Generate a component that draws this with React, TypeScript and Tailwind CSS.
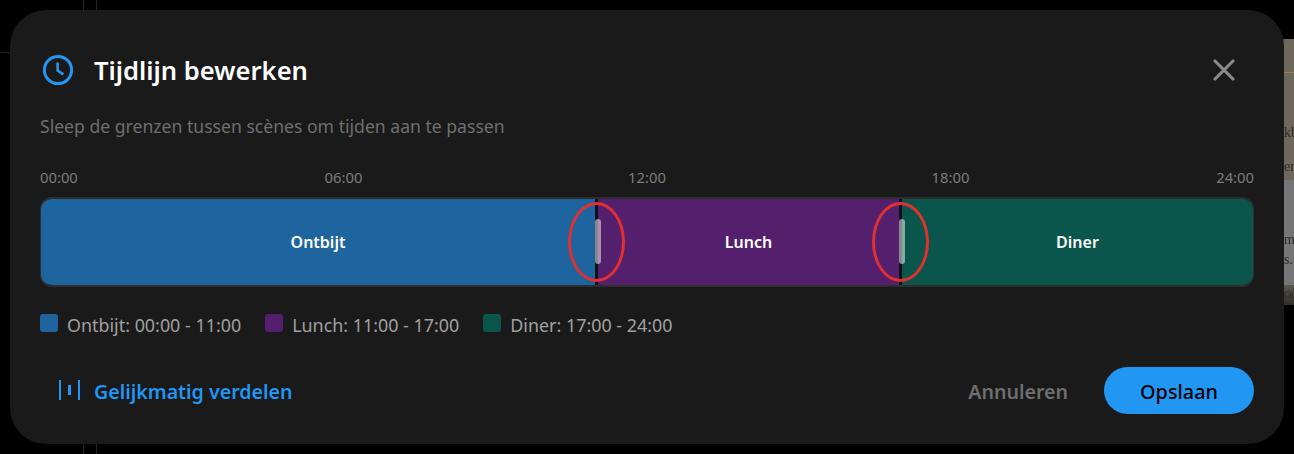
import { X } from 'lucide-react';

const font = { fontFamily: '"Noto Sans", "Open Sans", sans-serif' };

const legend = [
  { label: 'Ontbijt: 00:00 - 11:00', color: 'bg-[#1e659f]' },
  { label: 'Lunch: 11:00 - 17:00', color: 'bg-[#541f6c]' },
  { label: 'Diner: 17:00 - 24:00', color: 'bg-[#0b564c]' },
];

const behind = [
  { text: 'kb', cls: 'top-[86px]' },
  { text: 'en', cls: 'top-[120px]' },
  { text: 'm', cls: 'top-[193px]' },
  { text: 's.', cls: 'top-[213px]' },
];

function Handle() {
  return (
    <div className="relative z-10 w-[3px] shrink-0 bg-[#0d1117]">
      <div className="absolute left-0 top-[20px] h-[45px] w-[6px] rounded-full bg-[#ffffff80]" />
      <div className="absolute left-[-27px] top-[3px] h-[80px] w-[57px] rounded-[50%] border-[3px] border-[#e22f2f]" />
    </div>
  );
}

function ClockIcon() {
  return (
    <svg viewBox="0 0 32 32" className="h-[32px] w-[32px]" fill="none" stroke="#2196f3" strokeWidth="3">
      <circle cx="16" cy="16" r="13.6" />
      <path d="M15.6 8.5V16.6L21.4 20.4" strokeWidth="2.6" />
    </svg>
  );
}

function DistributeIcon() {
  return (
    <svg viewBox="0 0 21 20" className="h-[20px] w-[21px]" fill="#2196f3">
      <rect x="0" y="0" width="2" height="20" />
      <rect x="9" y="5" width="3" height="10" />
      <rect x="19" y="0" width="2" height="20" />
    </svg>
  );
}

export default function App() {
  return (
    <div className="relative h-[454px] w-[1294px] overflow-hidden bg-black p-[10px]" style={font}>
      {/* page behind the dialog */}
      <div className="absolute left-[1280px] top-[39px] flex h-[266px] w-[14px] flex-col overflow-hidden bg-[#6e675c] font-['Liberation_Serif',serif] text-[14px] leading-[16px] text-[#2c2a26] blur-[0.6px]">
        <div className="mt-[33px] h-px bg-[#a07f45]" />
        <div className="mt-[107px] h-[105px] bg-[#767676]" />
        <div className="flex-1 bg-gradient-to-b from-[#5c5a55] to-[#2e2c28]" />
        {behind.map((b) => (
          <span key={b.text} className={`absolute left-[4px] ${b.cls}`}>
            {b.text}
          </span>
        ))}
        <span className="absolute left-[4px] top-[250px] text-[10px] leading-[12px]">Onb</span>
      </div>
      <div className="absolute left-[83px] top-0 h-full w-px bg-[#222222]" />
      <div className="absolute left-[96px] top-0 h-full w-px bg-[#222222]" />
      <div className="absolute left-0 top-[52px] h-px w-[94px] bg-[#222222]" />

      <div className="relative flex h-[434px] w-[1274px] flex-col rounded-[36px] bg-[#1a1a1a] px-[30px]">
        <div className="mt-[43px] flex h-[34px] items-center">
          <div className="ml-[2px]">
            <ClockIcon />
          </div>
          <h2 className="ml-[20px] mt-[2px] text-[25.6px] font-semibold leading-none text-white">Tijdlijn bewerken</h2>
          <X className="ml-auto mr-[12px] h-[36px] w-[36px] text-[#8a8a8a]" strokeWidth={2.1} />
        </div>

        <p className="mt-[28px] text-[17.6px] leading-[22px] text-[#6f6f6f]">
          Sleep de grenzen tussen scènes om tijden aan te passen
        </p>

        <div className="mt-[30px] grid grid-cols-8 text-[14.8px] leading-[20px] text-[#7c7c7c]">
          <span>00:00</span>
          <span className="col-span-2 text-center">06:00</span>
          <span className="col-span-2 text-center">12:00</span>
          <span className="col-span-2 text-center">18:00</span>
          <span className="text-right">24:00</span>
        </div>

        <div className="mt-[10px] flex h-[90px] w-[1214px] rounded-[12px] border-x border-y-2 border-[#2e2e2e] text-[16px] font-semibold text-white [overflow:clip]">
          <div className="flex w-[554px] items-center justify-center bg-[#1e659f]">Ontbijt</div>
          <Handle />
          <div className="flex w-[301px] items-center justify-center bg-[#541f6c]">Lunch</div>
          <Handle />
          <div className="flex flex-1 items-center justify-center bg-[#0b564c]">Diner</div>
        </div>

        <div className="mt-[26px] flex gap-[24px]">
          {legend.map((l) => (
            <div key={l.label} className="flex items-center gap-[9px] text-[17.9px] leading-[24px] text-[#a0a0a0]">
              <span className={`mb-[4px] h-[18px] w-[18px] rounded-[3px] ${l.color}`} />
              {l.label}
            </div>
          ))}
        </div>

        <div className="mt-[29px] flex items-center">
          <div className="ml-[19px]">
            <DistributeIcon />
          </div>
          <span className="ml-[14px] mt-[3px] text-[19.6px] font-semibold text-[#2196f3]">Gelijkmatig verdelen</span>
          <span className="ml-auto mt-[3px] text-[19.6px] font-semibold text-[#6e6e6e]">Annuleren</span>
          <button className="ml-[36px] mt-[1px] flex h-[47px] w-[150px] items-center justify-center rounded-full bg-[#2196f3] text-[19.8px] font-medium text-black">
            <span className="mt-[3px]">Opslaan</span>
          </button>
        </div>
      </div>
    </div>
  );
}
